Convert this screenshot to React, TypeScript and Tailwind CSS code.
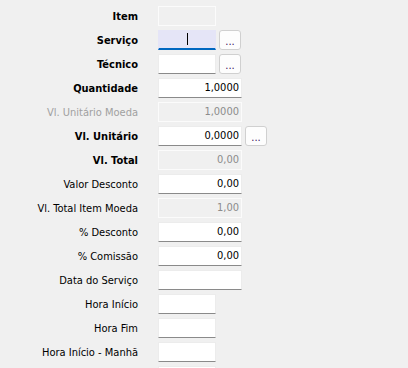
import type { ReactNode } from 'react';

type Kind = 'enabled' | 'disabled' | 'focused';

interface Field {
  label: string;
  bold?: boolean;
  dim?: boolean;
  kind: Kind;
  wide?: boolean;
  value?: string;
  button?: boolean;
}

// ─── Data ─────────────────────────────────────────────────────────────────────

const FIELDS: Field[] = [
  { label: 'Item', bold: true, kind: 'disabled' },
  { label: 'Serviço', bold: true, kind: 'focused', button: true },
  { label: 'Técnico', bold: true, kind: 'enabled', button: true },
  { label: 'Quantidade', bold: true, kind: 'enabled', wide: true, value: '1,0000' },
  { label: 'Vl. Unitário Moeda', dim: true, kind: 'disabled', wide: true, value: '1,0000' },
  { label: 'Vl. Unitário', bold: true, kind: 'enabled', wide: true, value: '0,0000', button: true },
  { label: 'Vl. Total', bold: true, kind: 'disabled', wide: true, value: '0,00' },
  { label: 'Valor Desconto', kind: 'enabled', wide: true, value: '0,00' },
  { label: 'Vl. Total Item Moeda', kind: 'disabled', wide: true, value: '1,00' },
  { label: '% Desconto', kind: 'enabled', wide: true, value: '0,00' },
  { label: '% Comissão', kind: 'enabled', wide: true, value: '0,00' },
  { label: 'Data do Serviço', kind: 'enabled', wide: true },
  { label: 'Hora Início', kind: 'enabled' },
  { label: 'Hora Fim', kind: 'enabled' },
  { label: 'Hora Início - Manhã', kind: 'enabled' },
  { label: '', kind: 'enabled' },
];

const BOX: Record<Kind, string> = {
  enabled: 'bg-white border border-[#ececec] border-b-[#8a8a8a] text-black',
  disabled: 'bg-[#f0f0f0] border border-[#fbfbfb] text-[#8c8c8c]',
  focused: 'bg-[#e5e5f7] border border-[#e5e5f7] border-b-2 border-b-[#0067c0] text-black',
};

// ─── Parts ────────────────────────────────────────────────────────────────────

function DotsButton() {
  return (
    <div className="ml-[3px] w-[22px] h-5 rounded-[3px] border border-[#d0d0d0] bg-[#fdfdfd] flex items-end justify-center pb-[2px] text-[11px] leading-none text-[#3a1060]">
      ...
    </div>
  );
}

function Input({ field }: { field: Field }): ReactNode {
  return (
    <div
      className={`relative h-5 flex items-center justify-end pr-[2px] text-[11px] ${field.wide ? 'w-[84px]' : 'w-[58px]'} ${BOX[field.kind]}`}
    >
      {field.value}
      {field.kind === 'focused' && (
        <div className="absolute left-[28px] top-[2px] w-px h-[12px] bg-black" />
      )}
    </div>
  );
}

// ─── Component ────────────────────────────────────────────────────────────────

export default function App() {
  return (
    <div
      className="w-[408px] h-[368px] overflow-hidden bg-[#f0f0f0] pt-[6px]"
      style={{ fontFamily: '"DejaVu Sans Condensed", "Liberation Sans", sans-serif' }}
    >
      <div className="flex flex-col gap-1">
        {FIELDS.map((field, i) => (
          <div key={i} className="flex items-center h-5">
            <div
              className={`w-[138px] text-right text-[11px] leading-none ${field.bold ? 'font-bold text-black' : field.dim ? 'text-[#a0a0a0]' : 'text-black'}`}
            >
              {field.label}
            </div>
            <div className="ml-5 flex items-center">
              <Input field={field} />
              {field.button && <DotsButton />}
            </div>
          </div>
        ))}
      </div>
    </div>
  );
}
